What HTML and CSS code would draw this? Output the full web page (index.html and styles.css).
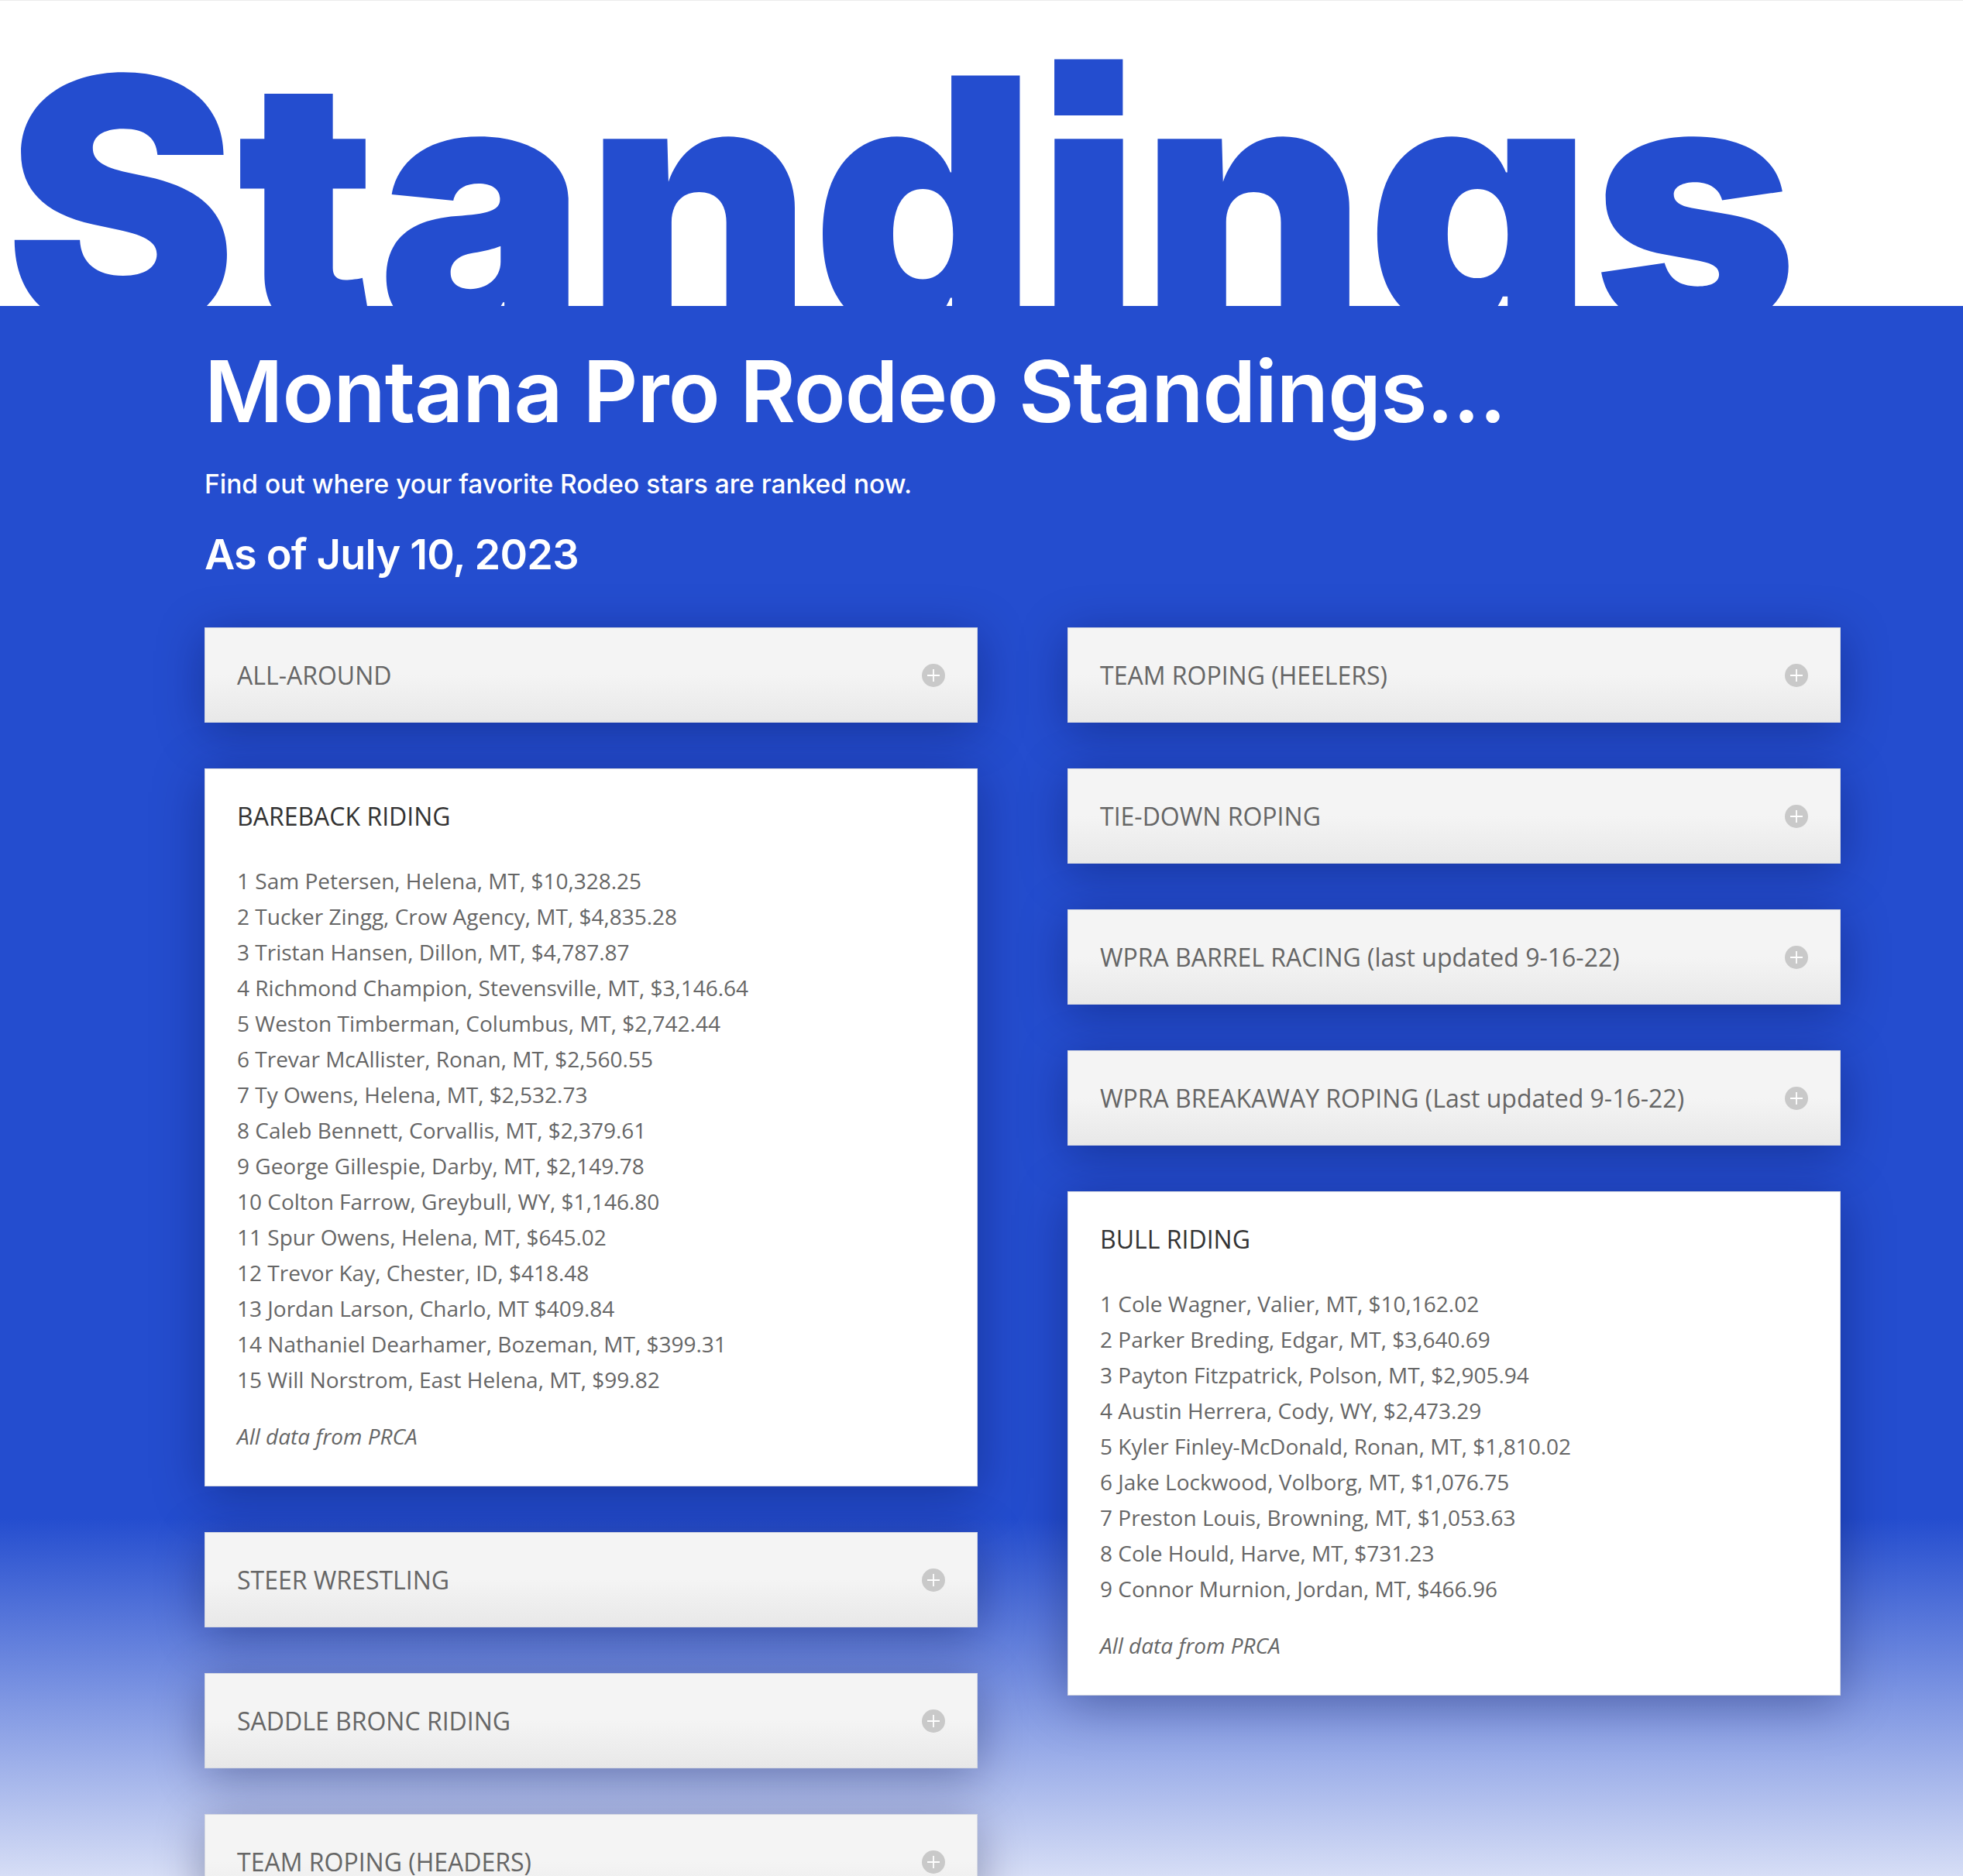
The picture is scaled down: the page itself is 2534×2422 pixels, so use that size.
FILE: index.html
```html
<!DOCTYPE html>
<html lang="en">
<head>
    <meta charset="UTF-8">
    <meta name="viewport" content="width=device-width, initial-scale=1.0">
    <title>Standings - Montana Pro Rodeo</title>
    <link rel="stylesheet" href="styles.css">
</head>
<body>
    <header class="hero">
        <h1 class="hero-title">Standings</h1>
    </header>

    <section class="standings">
        <h2 class="standings-title">Montana Pro Rodeo Standings...</h2>
        <p class="lead">Find out where your favorite Rodeo stars are ranked now.</p>
        <h3 class="as-of">As of July 10, 2023</h3>

        <div class="columns">
            <!-- Left column -->
            <div class="column">
                <div class="toggle">
                    <h4 class="toggle-title">ALL-AROUND
                        <svg class="toggle-icon" viewBox="0 0 30 30"><circle cx="15" cy="15" r="15"/><path d="M15 7v16M7 15h16"/></svg>
                    </h4>
                </div>

                <div class="toggle open">
                    <h4 class="toggle-title">BAREBACK RIDING</h4>
                    <div class="toggle-content">
                        <p>1 Sam Petersen, Helena, MT, $10,328.25<br>
                        2 Tucker Zingg, Crow Agency, MT, $4,835.28<br>
                        3 Tristan Hansen, Dillon, MT, $4,787.87<br>
                        4 Richmond Champion, Stevensville, MT, $3,146.64<br>
                        5 Weston Timberman, Columbus, MT, $2,742.44<br>
                        6 Trevar McAllister, Ronan, MT, $2,560.55<br>
                        7 Ty Owens, Helena, MT, $2,532.73<br>
                        8 Caleb Bennett, Corvallis, MT, $2,379.61<br>
                        9 George Gillespie, Darby, MT, $2,149.78<br>
                        10 Colton Farrow, Greybull, WY, $1,146.80<br>
                        11 Spur Owens, Helena, MT, $645.02<br>
                        12 Trevor Kay, Chester, ID, $418.48<br>
                        13 Jordan Larson, Charlo, MT $409.84<br>
                        14 Nathaniel Dearhamer, Bozeman, MT, $399.31<br>
                        15 Will Norstrom, East Helena, MT, $99.82</p>
                        <p><em>All data from PRCA</em></p>
                    </div>
                </div>

                <div class="toggle">
                    <h4 class="toggle-title">STEER WRESTLING
                        <svg class="toggle-icon" viewBox="0 0 30 30"><circle cx="15" cy="15" r="15"/><path d="M15 7v16M7 15h16"/></svg>
                    </h4>
                </div>

                <div class="toggle">
                    <h4 class="toggle-title">SADDLE BRONC RIDING
                        <svg class="toggle-icon" viewBox="0 0 30 30"><circle cx="15" cy="15" r="15"/><path d="M15 7v16M7 15h16"/></svg>
                    </h4>
                </div>

                <div class="toggle">
                    <h4 class="toggle-title">TEAM ROPING (HEADERS)
                        <svg class="toggle-icon" viewBox="0 0 30 30"><circle cx="15" cy="15" r="15"/><path d="M15 7v16M7 15h16"/></svg>
                    </h4>
                </div>
            </div>

            <!-- Right column -->
            <div class="column">
                <div class="toggle">
                    <h4 class="toggle-title">TEAM ROPING (HEELERS)
                        <svg class="toggle-icon" viewBox="0 0 30 30"><circle cx="15" cy="15" r="15"/><path d="M15 7v16M7 15h16"/></svg>
                    </h4>
                </div>

                <div class="toggle">
                    <h4 class="toggle-title">TIE-DOWN ROPING
                        <svg class="toggle-icon" viewBox="0 0 30 30"><circle cx="15" cy="15" r="15"/><path d="M15 7v16M7 15h16"/></svg>
                    </h4>
                </div>

                <div class="toggle">
                    <h4 class="toggle-title">WPRA BARREL RACING (last updated 9-16-22)
                        <svg class="toggle-icon" viewBox="0 0 30 30"><circle cx="15" cy="15" r="15"/><path d="M15 7v16M7 15h16"/></svg>
                    </h4>
                </div>

                <div class="toggle">
                    <h4 class="toggle-title">WPRA BREAKAWAY ROPING (Last updated 9-16-22)
                        <svg class="toggle-icon" viewBox="0 0 30 30"><circle cx="15" cy="15" r="15"/><path d="M15 7v16M7 15h16"/></svg>
                    </h4>
                </div>

                <div class="toggle open">
                    <h4 class="toggle-title">BULL RIDING</h4>
                    <div class="toggle-content">
                        <p>1 Cole Wagner, Valier, MT, $10,162.02<br>
                        2 Parker Breding, Edgar, MT, $3,640.69<br>
                        3 Payton Fitzpatrick, Polson, MT, $2,905.94<br>
                        4 Austin Herrera, Cody, WY, $2,473.29<br>
                        5 Kyler Finley-McDonald, Ronan, MT, $1,810.02<br>
                        6 Jake Lockwood, Volborg, MT, $1,076.75<br>
                        7 Preston Louis, Browning, MT, $1,053.63<br>
                        8 Cole Hould, Harve, MT, $731.23<br>
                        9 Connor Murnion, Jordan, MT, $466.96</p>
                        <p><em>All data from PRCA</em></p>
                    </div>
                </div>
            </div>
        </div>
    </section>
</body>
</html>
```

FILE: styles.css
```css
* {
    box-sizing: border-box;
}

body {
    margin: 0;
    font-family: "Open Sans", sans-serif;
    background: #fff;
}

/* Big page title, cut off by the blue section below */
.hero {
    height: 395px;
    overflow: hidden;
    border-top: 1px solid #ececec;
    background: #fff;
}

.hero-title {
    margin: 0;
    padding: 136px 0 0 6px;
    font-family: Inter, sans-serif;
    font-weight: 900;
    font-size: 450px;
    line-height: 250px;
    letter-spacing: 0;
    color: #244dcf;
    white-space: nowrap;
    font-feature-settings: "ss07";
}

.standings {
    padding: 44px 158px 80px 264px;
    background: linear-gradient(to bottom, #244dcf 0, #244dcf 1565px, #dde3f7 2045px);
}

.standings-title {
    margin: 0;
    font-family: Inter, sans-serif;
    font-weight: 600;
    font-size: 110px;
    line-height: 132px;
    letter-spacing: -1px;
    color: #fff;
}

.lead {
    margin: 30px 0 0;
    font-family: Inter, sans-serif;
    font-weight: 500;
    font-size: 33.5px;
    line-height: 48px;
    color: #fff;
}

.as-of {
    margin: 34px 0 0;
    font-family: Inter, sans-serif;
    font-weight: 600;
    font-size: 54px;
    line-height: 65px;
    letter-spacing: -0.8px;
    color: #fff;
}

.columns {
    margin-top: 62px;
    display: grid;
    grid-template-columns: 1fr 1fr;
    column-gap: 116px;
    align-items: start;
}

.column {
    display: flex;
    flex-direction: column;
    gap: 59px;
}

/* Accordion toggles */
.toggle {
    background: linear-gradient(to bottom, #f4f4f4 50%, #e8e8e8 100%);
    border: 1px solid #d7dae2;
    box-shadow: 0 10px 60px rgba(0, 10, 60, 0.35);
}

.toggle.open {
    background: #fff;
}

.toggle-title {
    margin: 0;
    display: flex;
    justify-content: space-between;
    align-items: center;
    padding: 40px 41px;
    font-size: 32px;
    line-height: 41px;
    font-weight: 400;
    color: #666;
}

.toggle.open .toggle-title {
    color: #333;
}

.toggle-icon {
    width: 30px;
    height: 30px;
    flex: none;
}

.toggle-icon circle {
    fill: #c9c9c9;
}

.toggle-icon path {
    stroke: #fff;
    stroke-width: 1.8;
}

.toggle-content {
    padding: 0 41px 41px;
    font-size: 28px;
    line-height: 46px;
    color: #666;
}

.toggle-content p {
    margin: 0 0 27px;
}

.toggle-content p:last-child {
    margin-bottom: 0;
}
```
